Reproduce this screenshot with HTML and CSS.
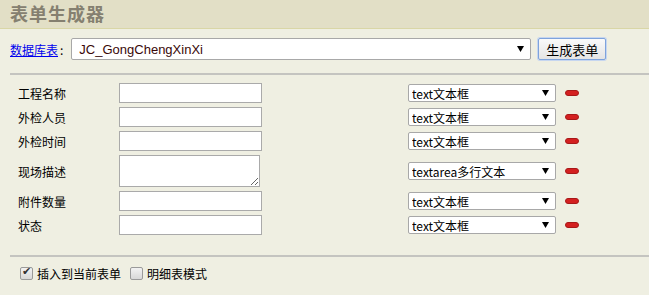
FILE: index.html
```html
<!DOCTYPE html>
<html>
<head>
    <title>表单生成器</title>
    <link rel="stylesheet" href="styles.css">
</head>
<body>
    <div class="page-header">表单生成器</div>
    <div class="source-row">
        <a href="#" class="source-link">数据库表</a><span class="colon">:</span>
        <select class="table-select">
            <option>JC_GongChengXinXi</option>
        </select>
        <button type="button" class="gen-btn">生成表单</button>
    </div>
    <div class="field-list">
        <div class="field-row">
            <span class="field-label">工程名称</span>
            <input type="text" class="field-input">
            <select class="type-select"><option>text文本框</option></select>
            <span class="remove-btn"></span>
        </div>
        <div class="field-row">
            <span class="field-label">外检人员</span>
            <input type="text" class="field-input">
            <select class="type-select"><option>text文本框</option></select>
            <span class="remove-btn"></span>
        </div>
        <div class="field-row">
            <span class="field-label">外检时间</span>
            <input type="text" class="field-input">
            <select class="type-select"><option>text文本框</option></select>
            <span class="remove-btn"></span>
        </div>
        <div class="field-row tall">
            <span class="field-label">现场描述</span>
            <textarea class="field-area"></textarea>
            <select class="type-select"><option>textarea多行文本</option></select>
            <span class="remove-btn"></span>
        </div>
        <div class="field-row">
            <span class="field-label">附件数量</span>
            <input type="text" class="field-input">
            <select class="type-select"><option>text文本框</option></select>
            <span class="remove-btn"></span>
        </div>
        <div class="field-row">
            <span class="field-label">状态</span>
            <input type="text" class="field-input">
            <select class="type-select"><option>text文本框</option></select>
            <span class="remove-btn"></span>
        </div>
    </div>
    <div class="options-row">
        <label class="opt"><input type="checkbox" checked>插入到当前表单</label>
        <label class="opt"><input type="checkbox">明细表模式</label>
    </div>
</body>
</html>
```

FILE: styles.css
```css
body {
    margin: 0;
    background-color: #efefe2;
    font-family: "Noto Sans CJK SC", "Liberation Sans", sans-serif;
    font-size: 12px;
    color: #000;
}
.page-header {
    height: 28px;
    line-height: 26px;
    padding-left: 10px;
    background-color: #e2dfc6;
    border-bottom: 1px solid #d9d6a6;
    color: #858070;
    font-size: 18px;
    font-weight: bold;
    letter-spacing: 1px;
}
.source-row {
    display: flex;
    align-items: center;
    height: 22px;
    margin: 9px 0 0 10px;
    padding-bottom: 13px;
    border-bottom: 2px solid #c4c4c0;
}
.source-link {
    color: #0000ee;
    text-decoration: underline;
}
.colon {
    margin: 0 8px 0 2px;
}
select {
    appearance: none;
    -webkit-appearance: none;
    background: #fff url("data:image/svg+xml;utf8,<svg xmlns='http://www.w3.org/2000/svg' width='7' height='6'><path d='M0 0h7L3.5 6z' fill='black'/></svg>") no-repeat right 6px center;
    border: 1px solid #a8a8a8;
    border-radius: 2px;
    box-sizing: border-box;
}
.table-select {
    width: 460px;
    height: 22px;
    font-family: "Liberation Sans", sans-serif;
    font-size: 13px;
    color: #3a0808;
    padding-left: 7px;
}
.gen-btn {
    margin-left: 7px;
    height: 22px;
    padding: 0 7px;
    font-family: "Noto Sans CJK SC", sans-serif;
    font-size: 13px;
    background: linear-gradient(#fafafa, #e4e4e4);
    border: 1px solid #7ea3dc;
    border-radius: 2px;
    box-shadow: 0 0 0 1px #c6d6f0;
}
.field-list {
    display: flex;
    flex-direction: column;
    gap: 4px;
    margin-left: 10px;
    padding: 8px 0 20px 8px;
    border-bottom: 2px solid #c4c4c0;
}
.field-row {
    display: flex;
    align-items: center;
    height: 20px;
}
.field-row.tall {
    height: 32px;
}
.field-label {
    width: 101px;
}
.field-input,
.field-area {
    box-sizing: border-box;
    width: 143px;
    height: 20px;
    margin: 0;
    border: 1px solid #aaa;
    background: #fff;
}
.field-area {
    width: 141px;
    height: 32px;
    resize: both;
}
.type-select {
    width: 148px;
    height: 18px;
    margin-left: 146px;
    font-family: "Noto Sans CJK SC", sans-serif;
    font-size: 12px;
    padding: 0 0 0 3px;
    color: #000;
}
.field-row.tall .type-select {
    margin-left: 148px;
}
.remove-btn {
    width: 12px;
    height: 4px;
    margin-left: 9px;
    background: #d42020;
    border: 1px solid #a81818;
    border-radius: 3px;
}
.options-row {
    display: flex;
    align-items: center;
    gap: 9px;
    padding: 8px 0 0 20px;
}
.opt {
    display: flex;
    align-items: center;
}
.opt input {
    appearance: none;
    -webkit-appearance: none;
    position: relative;
    box-sizing: border-box;
    width: 13px;
    height: 13px;
    margin: 0 4px 0 0;
    border: 1px solid #9a9a9a;
    border-radius: 2px;
    background: linear-gradient(#f2f2f2, #d8d8d8);
}
.opt input:checked::before {
    content: "✔";
    position: absolute;
    left: 1px;
    top: -3px;
    font-size: 11px;
    color: #333;
}
```
